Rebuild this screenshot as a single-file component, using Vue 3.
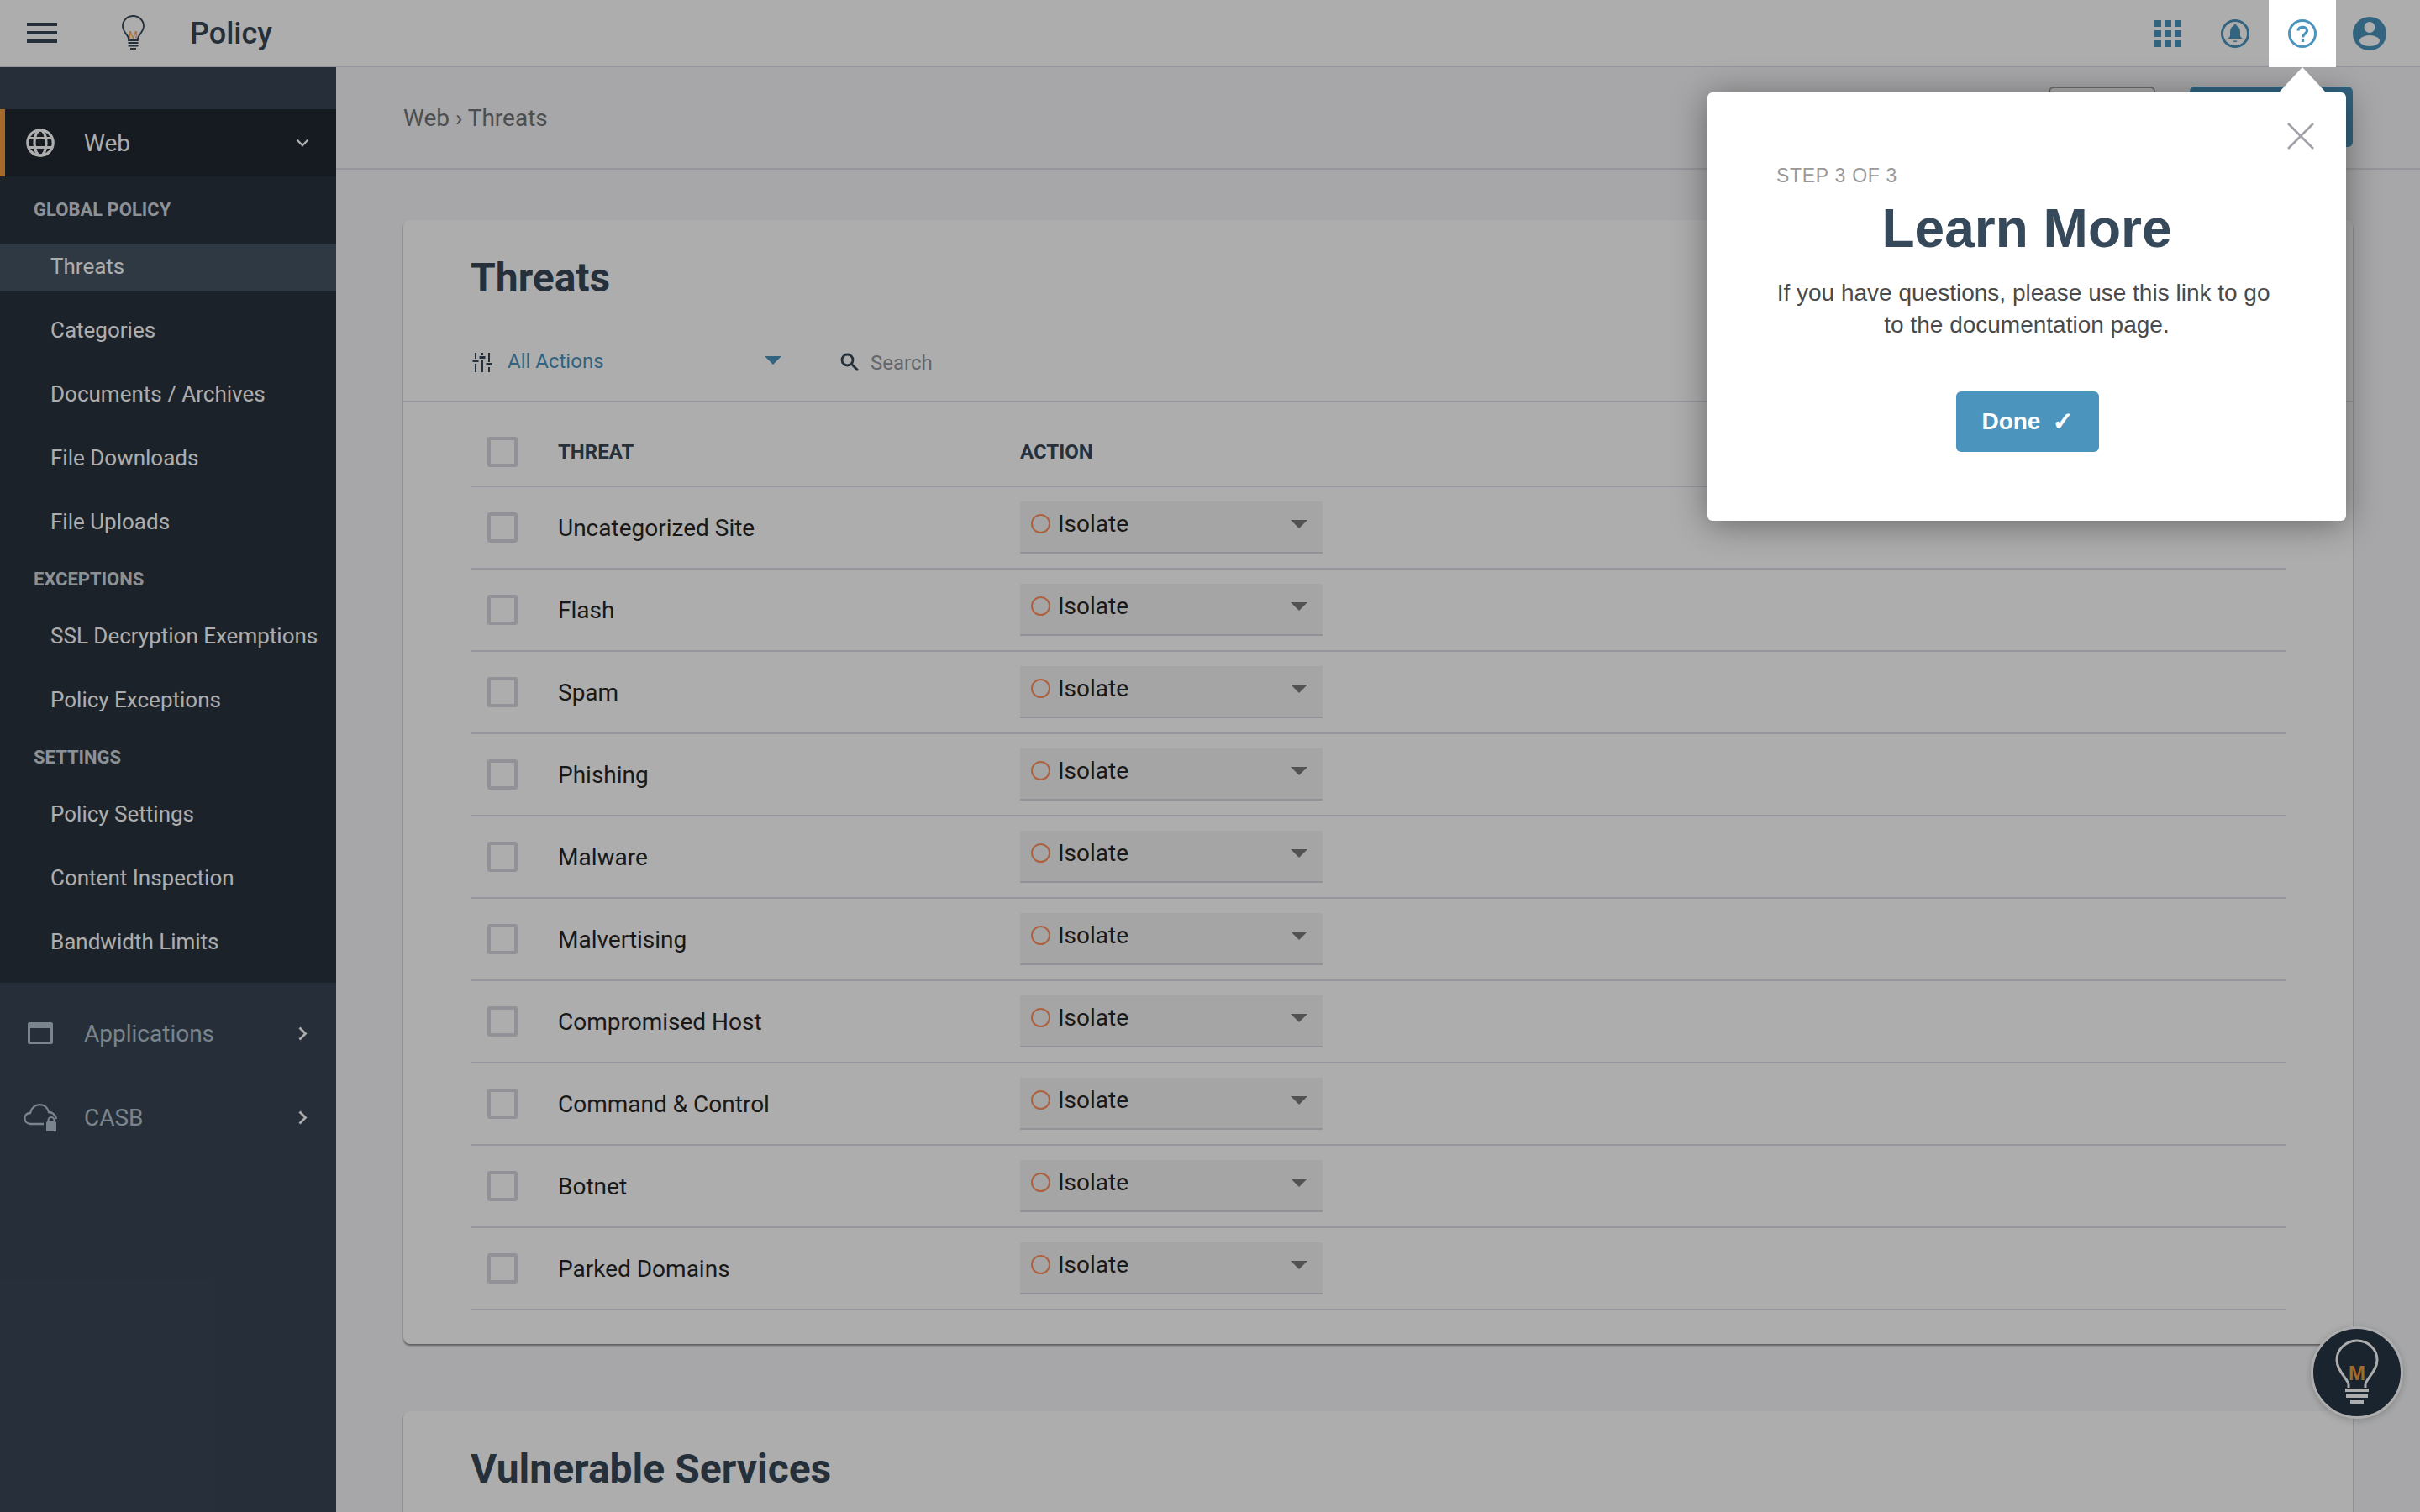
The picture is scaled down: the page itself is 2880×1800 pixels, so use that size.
<template>
  <div class="app">
    <header class="topbar">
      <button class="burger"><span></span><span></span><span></span></button>
      <svg class="logo" viewBox="0 0 27 42" width="27" height="42">
        <path d="M8 30V28C8 24 1 20 1 13A12.500 12 0 0 1 26 13C26 20 19 24 19 28V30Z" fill="none" stroke="#394857" stroke-width="1.800" />
        <text x="13.500" y="28" text-anchor="middle" class="logo-m">M</text>
        <path d="M7.500 33H19.500M7.500 36.500H19.500M10 40H17" stroke="#394857" stroke-width="1.800" />
      </svg>
      <div class="app-name">Policy</div>
      <div class="top-icons">
        <div class="top-icon">
          <svg viewBox="0 0 32 32" width="32" height="32" fill="#4b94bd">
            <rect v-for="c in gridCells" :key="c.id" :x="c.x" :y="c.y" width="8" height="8" />
          </svg>
        </div>
        <div class="top-icon">
          <svg viewBox="0 0 34 34" width="34" height="34">
            <circle cx="17" cy="17" r="15.500" fill="none" stroke="#4b94bd" stroke-width="3" />
            <path d="M17 6a2 2 0 0 1 2 2c3 1 4 4 4 7v5l2.500 3H8.500l2.500-3v-5c0-3 1-6 4-7a2 2 0 0 1 2-2ZM14.500 25.500h5a2.500 1.500 0 0 1-5 0Z" fill="#4b94bd" />
          </svg>
        </div>
        <div class="top-icon help">
          <svg viewBox="0 0 34 34" width="34" height="34" fill="none" stroke="#4b94bd">
            <circle cx="17" cy="17" r="15.500" stroke-width="3" />
            <path d="M12 13.500C12 8 22.500 8 22.500 13.500C22.500 17 17.500 17 17.500 21.500" stroke-width="3.200" />
            <path d="M17.500 23.500V27" stroke-width="3.400" />
          </svg>
        </div>
        <div class="top-icon">
          <svg viewBox="0 0 40 40" width="40" height="40">
            <circle cx="20" cy="20" r="20" fill="#4b94bd" />
            <circle cx="20" cy="12.500" r="6.500" fill="#fff" />
            <ellipse cx="20" cy="28.500" rx="12" ry="6.500" fill="#fff" />
          </svg>
        </div>
      </div>
    </header>

    <div class="body">
      <aside class="sidebar">
        <div class="nav-main active">
          <svg class="nav-icon" viewBox="0 0 34 34" width="34" height="34" fill="none" stroke="#fff" stroke-width="3.200">
            <circle cx="17" cy="17" r="15.200" />
            <ellipse cx="17" cy="17" rx="7" ry="15.200" />
            <path d="M3 11.500H31M3 22.500H31" />
          </svg>
          <span class="nav-text">Web</span>
          <svg class="chev" viewBox="0 0 16 10" width="16" height="10" fill="none" stroke="#fff" stroke-width="2.400"><path d="M1.500 1.500L8 8L14.500 1.500" /></svg>
        </div>
        <div class="submenu">
          <template v-for="group in navGroups" :key="group.title">
            <div class="sub-title">{{ group.title }}</div>
            <div v-for="item in group.items" :key="item" class="sub-item" :class="{ current: item === 'Threats' }">{{ item }}</div>
          </template>
        </div>
        <div class="nav-main muted">
          <svg class="nav-icon" viewBox="0 0 30 26" width="30" height="26" fill="#b3c3d0">
            <path d="M2 0H28A2 2 0 0 1 30 2V24A2 2 0 0 1 28 26H2A2 2 0 0 1 0 24V2A2 2 0 0 1 2 0ZM3 7V23H27V7Z" fill-rule="evenodd" />
          </svg>
          <span class="nav-text">Applications</span>
          <svg class="chev" viewBox="0 0 11 17" width="11" height="17" fill="none" stroke="#fff" stroke-width="2.800"><path d="M1.500 1.500L8.500 8.500L1.500 15.500" /></svg>
        </div>
        <div class="nav-main muted tall">
          <svg class="nav-icon cloud" viewBox="0 0 40 34" width="40" height="34" fill="none" stroke="#b3c3d0" stroke-width="2.400">
            <path d="M24 25H9C-1 25 -1 12 8 12C11 -1 27 -1 30 11C34 11 38 14 39 19" />
            <rect x="27" y="22" width="12" height="12" rx="1.500" fill="#b3c3d0" stroke="none" />
            <path d="M29.500 23V20.500a3.500 3.500 0 0 1 7 0V23" stroke-width="2" />
          </svg>
          <span class="nav-text">CASB</span>
          <svg class="chev" viewBox="0 0 11 17" width="11" height="17" fill="none" stroke="#fff" stroke-width="2.800"><path d="M1.500 1.500L8.500 8.500L1.500 15.500" /></svg>
        </div>
      </aside>

      <main class="content">
        <div class="crumbs">
          <div class="crumb-text">Web › Threats</div>
          <div class="crumb-actions">
            <button class="btn-outline"></button>
            <button class="btn-primary"></button>
          </div>
        </div>

        <section class="card">
          <h2 class="card-title">Threats</h2>
          <div class="toolbar">
            <svg class="filter-icon" viewBox="0 0 24 24" width="24" height="24" stroke="#394857" stroke-width="2" fill="#394857">
              <path d="M4 1V8M4 14V24M12 1V4M12 10V24M20 1V12M20 18V24" fill="none" />
              <rect x="0.500" y="9" width="7" height="3" stroke="none" />
              <rect x="8.500" y="5" width="7" height="3" stroke="none" />
              <rect x="16.500" y="13" width="7" height="3" stroke="none" />
            </svg>
            <span class="filter-label">All Actions</span>
            <span class="filter-caret"></span>
            <svg class="search-icon" viewBox="0 0 22 22" width="22" height="22" fill="none" stroke="#394857" stroke-width="2.800">
              <circle cx="8.500" cy="8.500" r="6.500" /><path d="M13.500 13.500L21 21" />
            </svg>
            <span class="search-label">Search</span>
          </div>
          <div class="table">
            <div class="row head">
              <span class="check"></span>
              <span class="col-threat">THREAT</span>
              <span class="col-action">ACTION</span>
            </div>
            <div v-for="t in threats" :key="t" class="row">
              <span class="check"></span>
              <span class="col-threat">{{ t }}</span>
              <div class="select">
                <span class="dot"></span>
                <span class="select-text">Isolate</span>
                <span class="select-caret"></span>
              </div>
            </div>
          </div>
        </section>

        <section class="card second">
          <h2 class="card-title">Vulnerable Services</h2>
        </section>
      </main>
    </div>

    <div class="fab">
      <svg viewBox="0 0 54 82" width="54" height="82">
        <path d="M17 58V54C15 46 3 38 3 25A24 23 0 0 1 51 25C51 38 39 46 37 54V58" fill="none" stroke="#fff" stroke-width="3" transform="translate(0 1)" />
        <text x="27" y="50" text-anchor="middle" class="fab-m">M</text>
        <path d="M13 62H41M14 69H40M19 76H35" stroke="#fff" stroke-width="4" />
      </svg>
    </div>

    <div class="overlay"></div>

    <div class="tour">
      <span class="tour-arrow"></span>
      <svg class="tour-close" viewBox="0 0 32 32" width="32" height="32" fill="none" stroke="#a0a0a8" stroke-width="2.600">
        <path d="M1 1L31 31M31 1L1 31" />
      </svg>
      <div class="tour-step">STEP 3 OF 3</div>
      <h1 class="tour-title">Learn More</h1>
      <p class="tour-copy">If you have questions, please use this link to go&nbsp; to the documentation page.</p>
      <button class="tour-done"><span>Done</span><span class="tick">✓</span></button>
    </div>
  </div>
</template>

<script setup>
const navGroups = [
  { title: 'GLOBAL POLICY', items: ['Threats', 'Categories', 'Documents / Archives', 'File Downloads', 'File Uploads'] },
  { title: 'EXCEPTIONS', items: ['SSL Decryption Exemptions', 'Policy Exceptions'] },
  { title: 'SETTINGS', items: ['Policy Settings', 'Content Inspection', 'Bandwidth Limits'] }
]

const threats = [
  'Uncategorized Site',
  'Flash',
  'Spam',
  'Phishing',
  'Malware',
  'Malvertising',
  'Compromised Host',
  'Command & Control',
  'Botnet',
  'Parked Domains'
]

const gridCells = []
for (let r = 0; r < 3; r++) {
  for (let c = 0; c < 3; c++) {
    gridCells.push({ id: r + '-' + c, x: c * 12, y: r * 12 })
  }
}
</script>

<style>
html, body {
  margin: 0;
  overflow: hidden;
}
</style>

<style scoped>
.app {
  position: relative;
  width: 2880px;
  height: 1800px;
  overflow: hidden;
  display: flex;
  flex-direction: column;
  font-family: Roboto, "Liberation Sans", sans-serif;
  background: #f6f7fa;
}

.topbar {
  height: 80px;
  box-sizing: border-box;
  flex-shrink: 0;
  display: flex;
  align-items: center;
  background: #fff;
  border-bottom: 2px solid #dcdce5;
}

.burger {
  width: 36px;
  margin-left: 32px;
  padding: 0;
  border: 0;
  background: none;
  display: flex;
  flex-direction: column;
  gap: 6px;
}

.burger span {
  height: 4px;
  background: #394857;
}

.logo {
  margin-left: 77px;
}

.logo-m {
  font-family: "Liberation Sans", sans-serif;
  font-size: 13px;
  fill: #f49c3f;
}

.app-name {
  margin-left: 54px;
  margin-top: 2px;
  font-size: 36px;
  font-weight: 500;
  color: #394857;
}

.top-icons {
  margin-left: auto;
  margin-right: 20px;
  display: flex;
  height: 78px;
}

.top-icon {
  width: 80px;
  height: 80px;
  display: flex;
  align-items: center;
  justify-content: center;
}

.top-icon.help {
  position: relative;
  z-index: 20;
  background: #fff;
}

.body {
  flex: 1;
  display: flex;
  min-height: 0;
}

.sidebar {
  width: 400px;
  flex-shrink: 0;
  padding-top: 50px;
  background: #394655;
}

.nav-main {
  position: relative;
  height: 100px;
  display: flex;
  align-items: center;
  color: #fff;
  font-size: 28px;
}

.nav-main.active {
  height: 80px;
  background: #202830;
  box-shadow: inset 6px 0 0 #f49c3f;
}

.nav-main.muted {
  color: #b3c3d0;
  height: 100px;
  margin-top: 10px;
}

.nav-main.tall {
  margin-top: 0;
}

.nav-icon {
  position: absolute;
  left: 31px;
}

.muted .nav-icon {
  left: 33px;
}

.muted .nav-icon.cloud {
  left: 28px;
}

.nav-text {
  margin-left: 100px;
}

.chev {
  position: absolute;
  right: 32px;
}

.muted .chev {
  right: 34px;
}

.submenu {
  height: 960px;
  box-sizing: border-box;
  padding-top: 20px;
  background: #29333f;
}

.sub-title {
  height: 38px;
  margin-bottom: 22px;
  padding-left: 40px;
  display: flex;
  align-items: center;
  font-size: 22px;
  font-weight: 700;
  color: #cfd6dd;
}

.sub-item {
  height: 56px;
  box-sizing: border-box;
  margin-bottom: 20px;
  padding: 0 0 2px 60px;
  display: flex;
  align-items: center;
  font-size: 26px;
  color: #fff;
}

.sub-item.current {
  background: #455565;
}

.content {
  flex: 1;
  min-width: 0;
}

.crumbs {
  height: 122px;
  box-sizing: border-box;
  padding: 0 80px;
  display: flex;
  align-items: center;
  justify-content: space-between;
  border-bottom: 2px solid #dcdce5;
}

.crumb-text {
  font-size: 28px;
  color: #717375;
}

.crumb-actions {
  display: flex;
  gap: 41px;
  margin-top: -2px;
}

.btn-outline {
  width: 127px;
  height: 72px;
  border: 2px solid #9fa3a8;
  border-radius: 6px;
  background: #fff;
}

.btn-primary {
  width: 194px;
  height: 72px;
  border: 0;
  border-radius: 6px;
  background: #4b94bd;
}

.card {
  margin: 60px 80px 0;
  padding-top: 41px;
  background: #fff;
  border-radius: 8px;
  box-shadow: 0 1px 3px rgba(0, 0, 0, 0.08), 0 2px 2px rgba(0, 0, 0, 0.4);
}

.card.second {
  margin-top: 80px;
  height: 400px;
}

.card-title {
  margin: 0 0 0 80px;
  font-size: 48px;
  line-height: 56px;
  font-weight: 700;
  color: #394857;
}

.toolbar {
  height: 120px;
  box-sizing: border-box;
  padding: 26px 0 0 82px;
  display: flex;
  align-items: center;
  border-bottom: 2px solid #dcdce5;
}

.filter-label {
  margin-left: 18px;
  width: 306px;
  font-size: 24px;
  color: #4b94bd;
  margin-top: -2px;
}

.filter-caret {
  width: 0;
  height: 0;
  border-left: 10px solid transparent;
  border-right: 10px solid transparent;
  border-top: 10px solid #4b94bd;
  margin-top: -4px;
}

.search-icon {
  margin-left: 70px;
}

.search-label {
  margin-left: 14px;
  margin-top: 2px;
  font-size: 24px;
  color: #94979b;
}

.table {
  margin: 0 80px;
  padding-bottom: 40px;
}

.row {
  height: 98px;
  box-sizing: border-box;
  padding-left: 20px;
  display: flex;
  align-items: center;
  border-bottom: 2px solid #dcdce5;
  font-size: 28px;
  color: #262626;
}

.row.head {
  height: 101px;
  padding-top: 18px;
  font-size: 24px;
  font-weight: 700;
  color: #394857;
}

.check {
  width: 36px;
  height: 36px;
  box-sizing: border-box;
  border: 4px solid #d6d6df;
  border-radius: 3px;
  background: #fff;
}

.col-threat {
  margin-left: 48px;
  width: 550px;
}

.select {
  width: 360px;
  height: 62px;
  box-sizing: border-box;
  padding: 0 18px 7px 13px;
  display: flex;
  align-items: center;
  background: #f3f3f3;
  border-bottom: 2px solid #d6d6df;
}

.dot {
  width: 23px;
  height: 23px;
  box-sizing: border-box;
  border: 2px solid #ff9060;
  border-radius: 50%;
}

.select-text {
  margin-left: 9px;
  flex: 1;
}

.select-caret {
  width: 0;
  height: 0;
  border-left: 10px solid transparent;
  border-right: 10px solid transparent;
  border-top: 10px solid #7a7a7a;
}

.fab {
  position: absolute;
  left: 2750px;
  top: 1579px;
  width: 110px;
  height: 110px;
  box-sizing: border-box;
  border: 3px solid #fff;
  border-radius: 50%;
  background: #263546;
  display: flex;
  align-items: center;
  justify-content: center;
  box-shadow: 0 2px 8px rgba(0, 0, 0, 0.2);
}

.fab-m {
  font-family: "Liberation Sans", sans-serif;
  font-size: 24px;
  font-weight: 700;
  fill: #f49c3f;
}

.overlay {
  position: absolute;
  inset: 0;
  z-index: 10;
  background: rgba(0, 0, 0, 0.32);
}

.tour {
  position: absolute;
  z-index: 30;
  left: 2032px;
  top: 110px;
  width: 760px;
  height: 510px;
  box-sizing: border-box;
  padding: 86px 80px 0;
  background: #fff;
  border-radius: 6px;
  box-shadow: 0 4px 40px rgba(0, 0, 0, 0.4);
  display: flex;
  flex-direction: column;
  align-items: center;
  font-family: "Liberation Sans", Arial, sans-serif;
}

.tour-arrow {
  position: absolute;
  left: 680px;
  top: -30px;
  width: 0;
  height: 0;
  border-left: 28px solid transparent;
  border-right: 28px solid transparent;
  border-bottom: 30px solid #fff;
}

.tour-close {
  position: absolute;
  right: 38px;
  top: 36px;
}

.tour-step {
  align-self: flex-start;
  margin-left: 2px;
  font-size: 23px;
  line-height: 26px;
  letter-spacing: 0.7px;
  color: #999;
}

.tour-title {
  margin: 12px 0 0;
  font-size: 64px;
  line-height: 76px;
  font-weight: 700;
  color: #36495a;
}

.tour-copy {
  margin: 20px 0 0;
  font-size: 28px;
  line-height: 38px;
  text-align: center;
  color: #4a4a4a;
}

.tour-done {
  margin-top: 60px;
  margin-left: 2px;
  width: 170px;
  height: 72px;
  padding: 0;
  border: 0;
  border-radius: 6px;
  background: #4b94bd;
  color: #fff;
  font-family: "Liberation Sans", Arial, sans-serif;
  font-size: 28px;
  font-weight: 700;
  display: flex;
  align-items: center;
  justify-content: center;
  gap: 14px;
}

.tick {
  font-family: "DejaVu Sans", sans-serif;
  font-size: 30px;
  line-height: 1;
  -webkit-text-stroke: 1.2px #fff;
}
</style>
